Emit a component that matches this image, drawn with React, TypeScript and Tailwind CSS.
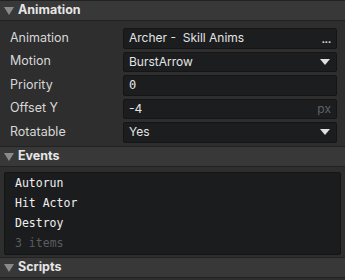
import { useState } from 'react'

const sans = "font-['Inter','Noto_Sans',sans-serif]"
const mono = "font-['DejaVu_Sans_Mono','Liberation_Mono',monospace]"

function SectionHeader({ title }: { title: string }) {
  return (
    <div className="flex h-[21px] items-center gap-[4px] border-y border-[#222] bg-[#383838] pl-[4px]">
      <svg width="10" height="8" viewBox="0 0 10 8" className="mt-[1px]">
        <path d="M0 0 L10 0 L5 8 Z" fill="#8a8a8a" />
      </svg>
      <span className={`${sans} text-[12.5px] font-bold text-[#e6e6e6]`}>{title}</span>
    </div>
  )
}

function Field({ label, children }: { label: string; children: React.ReactNode }) {
  return (
    <div className="flex h-[20.5px] items-center">
      <div className={`${sans} w-[123px] pl-[10px] text-[12.5px] text-[#d8d8d8]`}>{label}</div>
      <div className="flex-1">{children}</div>
    </div>
  )
}

function Box({ children }: { children: React.ReactNode }) {
  return (
    <div className="flex h-[20.5px] items-center justify-between rounded-[2px] border border-[#151515] bg-[#1c1d1f] px-[5px] text-[12px] text-[#e4e4e4]">
      {children}
    </div>
  )
}

function Caret() {
  return (
    <svg width="10" height="6" viewBox="0 0 10 6" className="mr-[1px]">
      <path d="M0 0 L10 0 L5 6 Z" fill="#e0e0e0" />
    </svg>
  )
}

export default function App() {
  const [events] = useState(['Autorun', 'Hit Actor', 'Destroy'])

  return (
    <div className="h-[280px] w-[345px] overflow-hidden bg-[#2e2e2e]">
      <SectionHeader title="Animation" />
      <div className="flex flex-col gap-[3px] pb-[3px] pr-[8px] pt-[7px]">
        <Field label="Animation">
          <Box>
            <span className={sans}>Archer -&nbsp; Skill Anims</span>
            <span className="text-[11px] font-bold leading-none text-[#ddd]">...</span>
          </Box>
        </Field>
        <Field label="Motion">
          <Box>
            <span className={sans}>BurstArrow</span>
            <Caret />
          </Box>
        </Field>
        <Field label="Priority">
          <Box>
            <span className={mono}>0</span>
          </Box>
        </Field>
        <Field label="Offset Y">
          <Box>
            <span className={sans}>-4</span>
            <span className={`${sans} text-[12px] text-[#5f6366]`}>px</span>
          </Box>
        </Field>
        <Field label="Rotatable">
          <Box>
            <span className={sans}>Yes</span>
            <Caret />
          </Box>
        </Field>
      </div>
      <SectionHeader title="Events" />
      <div className="px-[4px] pb-[2px] pt-[5px]">
        <div className={`${mono} flex flex-col rounded-[2px] border border-[#141414] bg-[#1b1c1e] px-[10px] pt-[1px] text-[11.5px]`}>
          {events.map((e) => (
            <div key={e} className="flex h-[20px] items-center text-[#f0f0f0]">
              {e}
            </div>
          ))}
          <div className="flex h-[20px] items-center text-[#5c5c5c]">{events.length} items</div>
        </div>
      </div>
      <SectionHeader title="Scripts" />
    </div>
  )
}
